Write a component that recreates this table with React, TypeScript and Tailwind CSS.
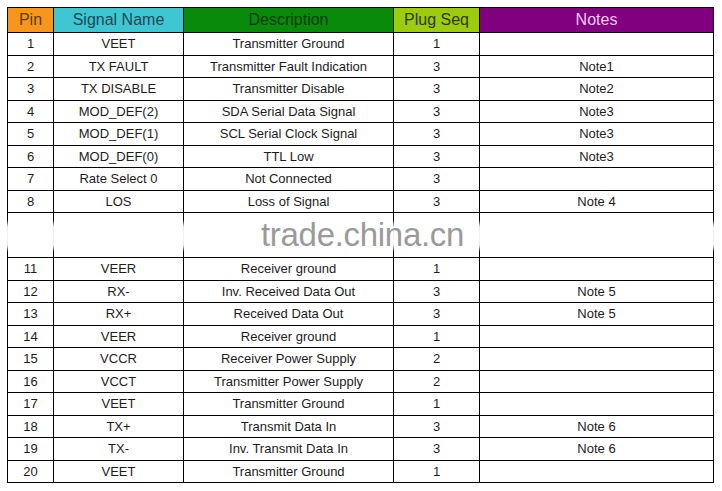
import React from 'react';

type Row = { pin: string; name: string; desc: string; seq: string; note: string };

const topRows: Row[] = [
  { pin: '1', name: 'VEET', desc: 'Transmitter Ground', seq: '1', note: '' },
  { pin: '2', name: 'TX FAULT', desc: 'Transmitter Fault Indication', seq: '3', note: 'Note1' },
  { pin: '3', name: 'TX DISABLE', desc: 'Transmitter Disable', seq: '3', note: 'Note2' },
  { pin: '4', name: 'MOD_DEF(2)', desc: 'SDA Serial Data Signal', seq: '3', note: 'Note3' },
  { pin: '5', name: 'MOD_DEF(1)', desc: 'SCL Serial Clock Signal', seq: '3', note: 'Note3' },
  { pin: '6', name: 'MOD_DEF(0)', desc: 'TTL Low', seq: '3', note: 'Note3' },
  { pin: '7', name: 'Rate Select 0', desc: 'Not Connected', seq: '3', note: '' },
  { pin: '8', name: 'LOS', desc: 'Loss of Signal', seq: '3', note: 'Note 4' },
];

const bottomRows: Row[] = [
  { pin: '11', name: 'VEER', desc: 'Receiver ground', seq: '1', note: '' },
  { pin: '12', name: 'RX-', desc: 'Inv. Received Data Out', seq: '3', note: 'Note 5' },
  { pin: '13', name: 'RX+', desc: 'Received Data Out', seq: '3', note: 'Note 5' },
  { pin: '14', name: 'VEER', desc: 'Receiver ground', seq: '1', note: '' },
  { pin: '15', name: 'VCCR', desc: 'Receiver Power Supply', seq: '2', note: '' },
  { pin: '16', name: 'VCCT', desc: 'Transmitter Power Supply', seq: '2', note: '' },
  { pin: '17', name: 'VEET', desc: 'Transmitter Ground', seq: '1', note: '' },
  { pin: '18', name: 'TX+', desc: 'Transmit Data In', seq: '3', note: 'Note 6' },
  { pin: '19', name: 'TX-', desc: 'Inv. Transmit Data In', seq: '3', note: 'Note 6' },
  { pin: '20', name: 'VEET', desc: 'Transmitter Ground', seq: '1', note: '' },
];

const cell = 'border border-black text-center p-0 leading-none';

function DataRow({ r }: { r: Row }) {
  return (
    <tr className="h-[22.5px]">
      <td className={cell}>{r.pin}</td>
      <td className={cell}>{r.name}</td>
      <td className={cell}>{r.desc}</td>
      <td className={cell}>{r.seq}</td>
      <td className={cell}>{r.note}</td>
    </tr>
  );
}

// soft white smudge that hides the vertical rule in the watermark band
function Smudge({ right }: { right?: boolean }) {
  return (
    <div
      className={
        'absolute top-[10px] h-[26px] w-[8px] rounded-full bg-white blur-[2px] ' +
        (right ? '-right-[4px]' : '-left-[4px]')
      }
    />
  );
}

export default function App() {
  return (
    <div
      className="relative w-[722px] h-[491px] bg-white pt-[7px] pl-[7px]"
      style={{ fontFamily: '"Liberation Sans", Arial, sans-serif' }}
    >
      <table className="border-collapse table-fixed w-[706px] text-[13px] text-[#1c1c1c]">
        <colgroup>
          <col className="w-[46px]" />
          <col className="w-[130px]" />
          <col className="w-[210px]" />
          <col className="w-[86px]" />
          <col className="w-[234px]" />
        </colgroup>
        <thead>
          <tr className="h-[25px] text-[16px]">
            <th className={cell + ' font-normal bg-[#f8951d] text-[#5a3a1a]'}>Pin</th>
            <th className={cell + ' font-normal bg-[#3ec6d2] text-[#1d4a55]'}>Signal Name</th>
            <th className={cell + ' font-normal bg-[#0a8a0a] text-[#063d06]'}>Description</th>
            <th className={cell + ' font-normal bg-[#9ccc0c] text-[#2c3a0c]'}>Plug Seq</th>
            <th className={cell + ' font-normal bg-[#800080] text-[#f2c8f2]'}>Notes</th>
          </tr>
        </thead>
        <tbody>
          {topRows.map((r) => (
            <DataRow key={r.pin} r={r} />
          ))}
          <tr className="h-[45px]">
            <td className={cell + ' relative'}>
              <Smudge />
              <Smudge right />
            </td>
            <td className={cell + ' relative'}>
              <Smudge right />
            </td>
            <td className={cell + ' relative'}>
              <Smudge right />
            </td>
            <td className={cell + ' relative'}>
              <Smudge right />
            </td>
            <td className={cell + ' relative'}>
              <Smudge right />
            </td>
          </tr>
          {bottomRows.map((r) => (
            <DataRow key={r.pin} r={r} />
          ))}
        </tbody>
      </table>
      <div className="absolute left-[261px] top-[218px] text-[33px] leading-none text-[#9a9a9a] tracking-[-0.3px]">
        trade.china.cn
      </div>
    </div>
  );
}
